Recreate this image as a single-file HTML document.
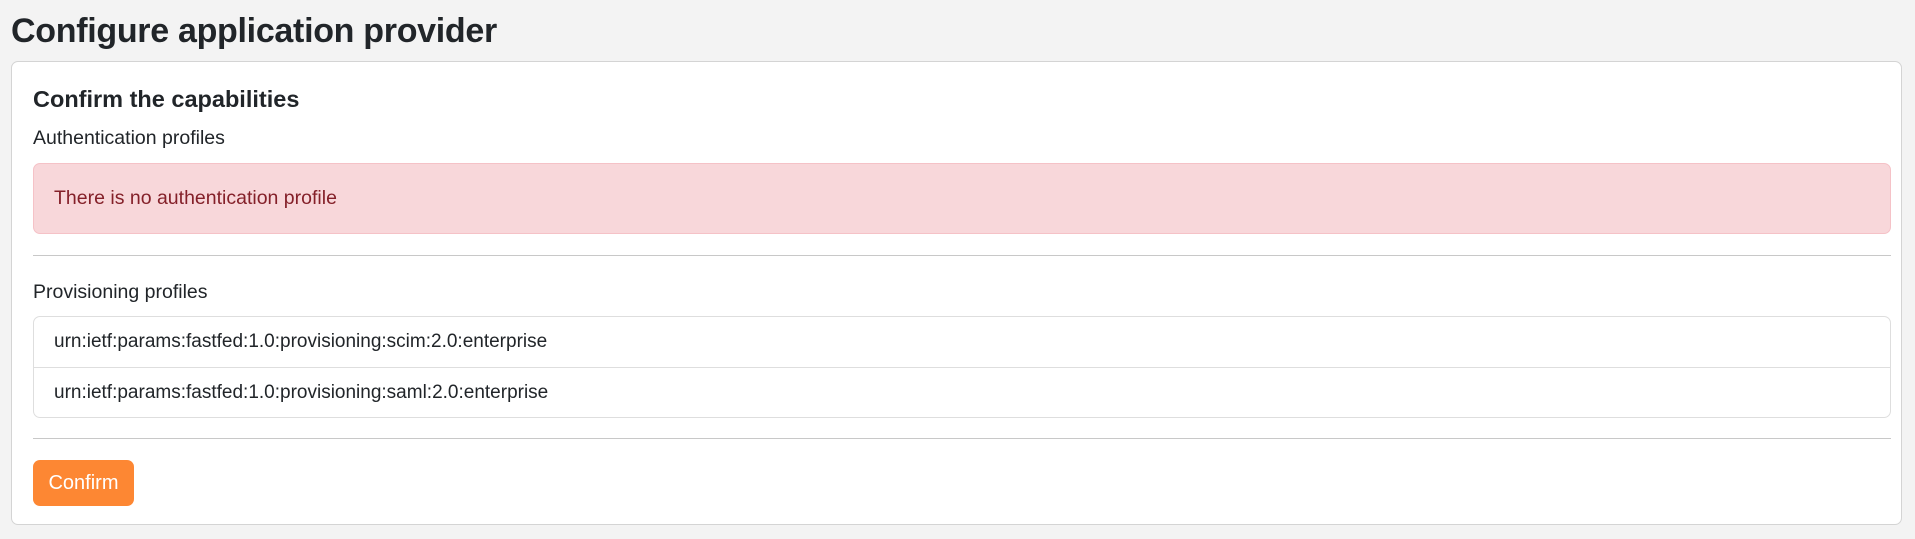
<!DOCTYPE html>
<html><head><meta charset="utf-8"><style>
*{box-sizing:border-box;margin:0;padding:0}
body{width:1915px;height:539px;background:#f3f3f3;font-family:"Liberation Sans",sans-serif;color:#212529;position:relative;overflow:hidden}
h1{position:absolute;left:11px;top:9px;font-size:34px;font-weight:bold;line-height:44px;color:#212529;letter-spacing:-0.3px}
.card{position:absolute;left:11px;top:61px;width:1891px;height:464px;background:#fff;border:1px solid #d4d4d4;border-radius:7px}
h2{position:absolute;left:21px;top:22px;font-size:23.5px;font-weight:bold;line-height:30px}
.lbl{position:absolute;left:21px;font-size:19.5px;line-height:24px}
.alert{position:absolute;left:21px;top:101px;width:1858px;height:71px;background:#f8d7da;border:1px solid #f5c2c7;border-radius:7px;color:#842029;font-size:19.5px;line-height:69px;padding-left:20px}
.hr{position:absolute;left:21px;width:1858px;height:1px;background:#c8c8c8}
.list{position:absolute;left:21px;top:254px;width:1858px;height:102px;border:1px solid #dedede;border-radius:7px}
.item{height:50px;line-height:50px;padding-left:20px;font-size:19px}
.item+.item{border-top:1px solid #dedede}
.btn{position:absolute;left:21px;top:398px;width:101px;height:46px;background:#fd8733;border-radius:7px;color:#fff;font-size:20px;line-height:46px;text-align:center}
</style></head><body>
<h1>Configure application provider</h1>
<div class="card">
<h2>Confirm the capabilities</h2>
<div class="lbl" style="top:64px">Authentication profiles</div>
<div class="alert">There is no authentication profile</div>
<div class="hr" style="top:193px"></div>
<div class="lbl" style="top:218px">Provisioning profiles</div>
<div class="list"><div class="item">urn:ietf:params:fastfed:1.0:provisioning:scim:2.0:enterprise</div><div class="item">urn:ietf:params:fastfed:1.0:provisioning:saml:2.0:enterprise</div></div>
<div class="hr" style="top:376px"></div>
<div class="btn">Confirm</div>
</div>
</body></html>
